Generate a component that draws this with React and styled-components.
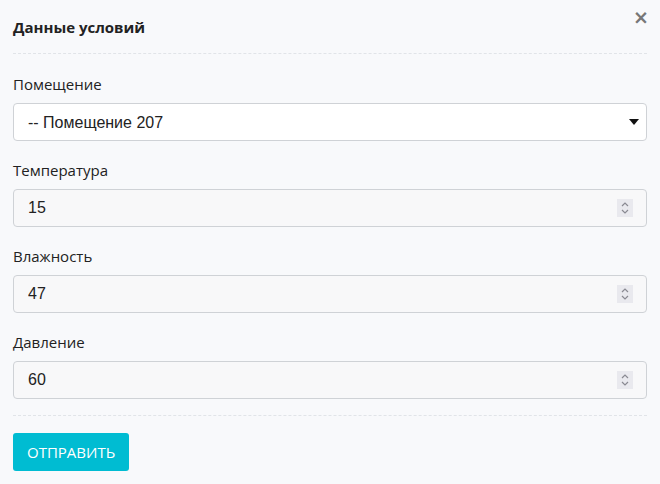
import React from 'react';
import styled, { createGlobalStyle } from 'styled-components';

const GlobalStyle = createGlobalStyle`
    html, body {
        margin: 0;
        padding: 0;
        background: #f8f9fb;
    }
    body {
        font-family: "Open Sans", "Noto Sans", sans-serif;
        color: #222;
    }
`;

const Modal = styled.div`
    width: 660px;
    height: 484px;
    box-sizing: border-box;
    padding: 0 13px;
    background: #f8f9fb;
`;

const Header = styled.div`
    display: flex;
    align-items: center;
    justify-content: space-between;
    height: 53px;
    border-bottom: 1px dashed #e1e4e8;
    position: relative;
`;

const Title = styled.h2`
    margin: 0;
    font-size: 15px;
    font-weight: 700;
    color: #222;
    padding-top: 1px;
`;

const Close = styled.button`
    position: absolute;
    right: -2px;
    top: 8px;
    border: 0;
    background: transparent;
    padding: 0;
    font-family: "DejaVu Sans", sans-serif;
    font-size: 19px;
    font-weight: 700;
    line-height: 1;
    color: #777;
    cursor: pointer;
`;

const Body = styled.div`
    display: flex;
    flex-direction: column;
    gap: 18px;
    padding: 19px 0 16px;
    border-bottom: 1px dashed #e1e4e8;
`;

const Field = styled.div`
    display: flex;
    flex-direction: column;
    gap: 8px;
`;

const Label = styled.label`
    font-size: 15px;
    line-height: 22px;
    color: #222;
`;

const baseInput = `
    box-sizing: border-box;
    width: 100%;
    height: 38px;
    border: 1px solid #cfd2d6;
    border-radius: 4px;
    padding: 0 14px;
    font-family: "Liberation Sans", Arial, sans-serif;
    font-size: 16px;
    color: #222;
    outline: none;
`;

const Control = styled.div`
    position: relative;
`;

const Select = styled.select`
    ${baseInput}
    appearance: none;
    background: #fff;
`;

const Caret = styled.svg`
    position: absolute;
    right: 8px;
    top: 16px;
    pointer-events: none;
`;

const NumberInput = styled.input`
    ${baseInput}
    background: #f8f8f9;
    padding-right: 40px;
    -moz-appearance: textfield;
    &::-webkit-inner-spin-button,
    &::-webkit-outer-spin-button {
        -webkit-appearance: none;
        margin: 0;
    }
`;

const Spinner = styled.svg`
    position: absolute;
    right: 14px;
    top: 10px;
    pointer-events: none;
`;

const Footer = styled.div`
    padding-top: 17px;
`;

const Submit = styled.button`
    height: 38px;
    padding: 0 14px;
    border: 0;
    border-radius: 3px;
    background: #00bcd2;
    color: #fff;
    font-family: "Open Sans", "Noto Sans", sans-serif;
    font-size: 15px;
    text-transform: uppercase;
    cursor: pointer;
`;

const fields = [
    { label: 'Температура', value: 15 },
    { label: 'Влажность', value: 47 },
    { label: 'Давление', value: 60 },
];

export default function App() {
    return (
        <React.Fragment>
            <GlobalStyle />
            <Modal>
                <Header>
                    <Title>Данные условий</Title>
                    <Close aria-label="close">×</Close>
                </Header>
                <Body>
                    <Field>
                        <Label>Помещение</Label>
                        <Control>
                            <Select defaultValue="207">
                                <option value="207">-- Помещение 207</option>
                            </Select>
                            <Caret width="10" height="6" viewBox="0 0 10 6">
                                <path d="M0 0 H10 L5 6 Z" fill="#111" />
                            </Caret>
                        </Control>
                    </Field>
                    {fields.map(f => (
                        <Field key={f.label}>
                            <Label>{f.label}</Label>
                            <Control>
                                <NumberInput type="number" defaultValue={f.value} />
                                <Spinner width="16" height="18" viewBox="0 0 16 18">
                                    <rect width="16" height="18" fill="#e9e9ee" />
                                    <path d="M5 7 L8 4 L11 7 M5 11 L8 14 L11 11" fill="none" stroke="#8a8a92" strokeWidth="1.2" />
                                </Spinner>
                            </Control>
                        </Field>
                    ))}
                </Body>
                <Footer>
                    <Submit>Отправить</Submit>
                </Footer>
            </Modal>
        </React.Fragment>
    );
}
